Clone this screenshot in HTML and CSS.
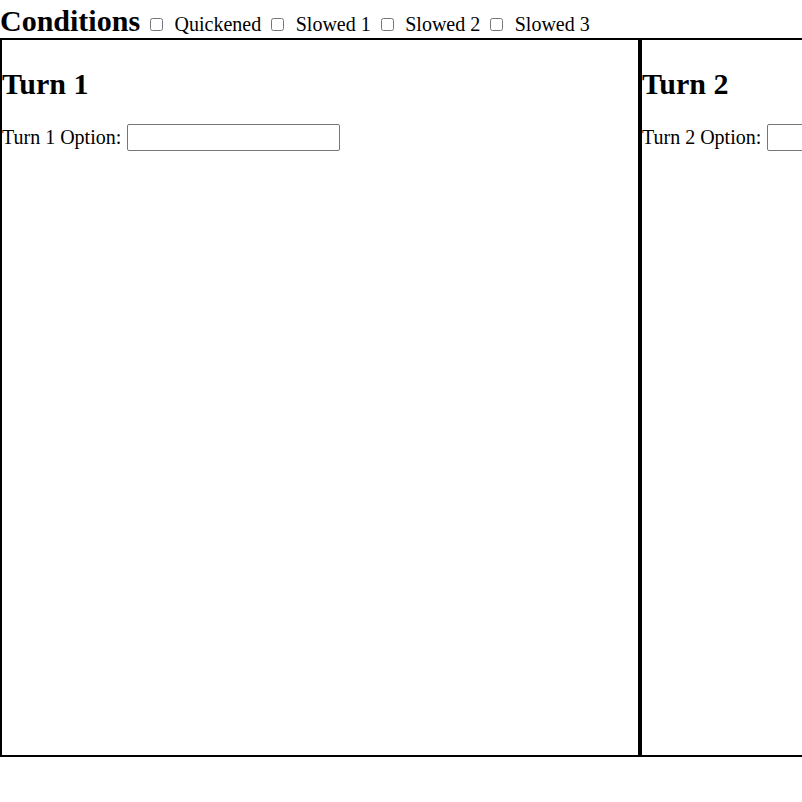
FILE: index.html
```html
<!DOCTYPE html>
<html>
<head>
<meta charset="utf-8">
<link rel="stylesheet" href="styles.css">
</head>
<body>
<div class="conditions">
  <h2 class="cond-title">Conditions</h2>
  <input type="checkbox" id="q"><label for="q">Quickened</label>
  <input type="checkbox" id="s1"><label for="s1">Slowed 1</label>
  <input type="checkbox" id="s2"><label for="s2">Slowed 2</label>
  <input type="checkbox" id="s3"><label for="s3">Slowed 3</label>
</div>
<div class="turns">
  <div class="turn">
    <h2 class="turn-title">Turn 1</h2>
    <div class="option-row">
      <label>Turn 1 Option:</label><input type="text" class="opt">
    </div>
  </div>
  <div class="turn">
    <h2 class="turn-title">Turn 2</h2>
    <div class="option-row">
      <label>Turn 2 Option:</label><input type="text" class="opt">
    </div>
  </div>
</div>
</body>
</html>
```
FILE: styles.css
```css
html, body {
  margin: 0;
  overflow: hidden;
}
body {
  font-family: "Liberation Serif", "Times New Roman", serif;
  font-size: 20px;
  color: #000;
  background: #fff;
}
.conditions {
  box-sizing: border-box;
  height: 38px;
  padding-top: 4px;
  display: flex;
  align-items: baseline;
  white-space: nowrap;
}
.cond-title {
  font-size: 30px;
  margin: 0;
}
.conditions input[type=checkbox] {
  width: 13px;
  height: 13px;
  margin: 0 0 1px 10px;
}
.conditions label {
  margin-left: 11.5px;
}
.turns {
  display: flex;
  width: max-content;
}
.turn {
  box-sizing: border-box;
  width: 640px;
  height: 719px;
  border: 2px solid #000;
  padding: 0;
  flex: none;
}
.turn-title {
  font-size: 30px;
  margin: 27px 0 23px 0;
}
.option-row {
  display: flex;
  align-items: center;
  height: 27px;
}
.opt {
  box-sizing: border-box;
  width: 213px;
  height: 27px;
  font-size: 16px;
  border: 1px solid #767676;
  border-radius: 2px;
  margin: 0 0 0 6px;
}
```
